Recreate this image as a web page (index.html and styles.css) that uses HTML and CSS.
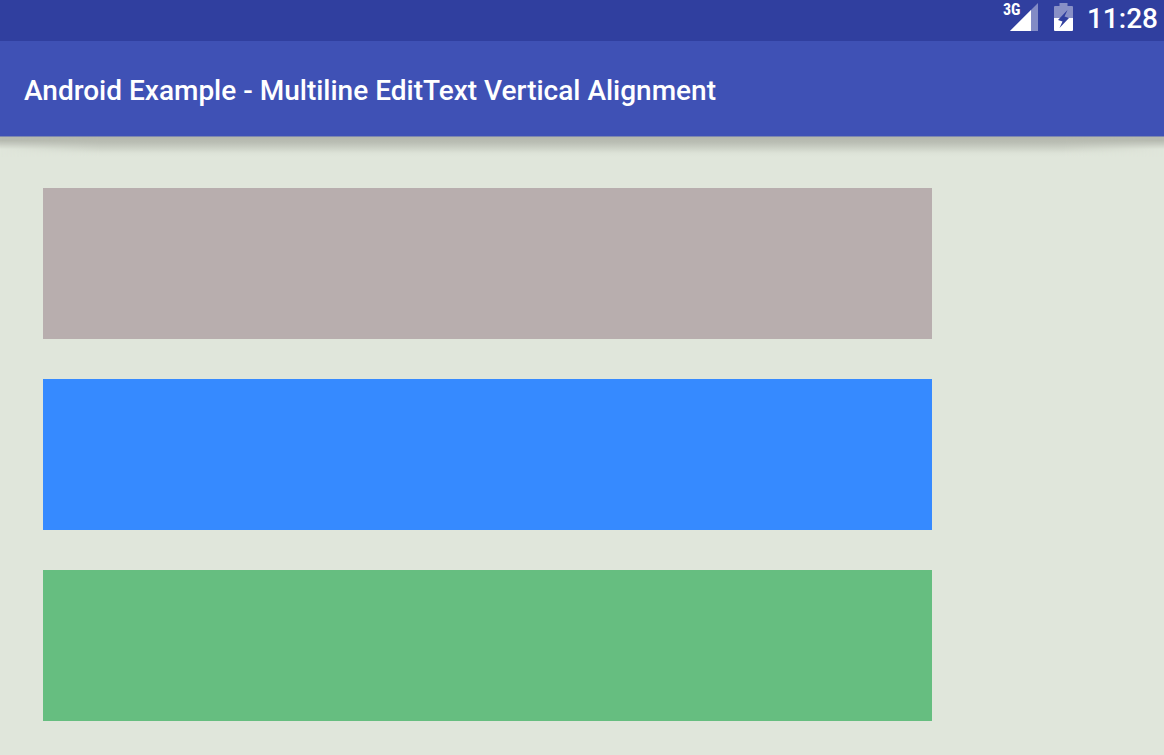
FILE: index.html
```html
<!DOCTYPE html>
<html lang="en">
<head>
<meta charset="utf-8">
<meta name="viewport" content="width=device-width, initial-scale=1">
<title>Android Example - Multiline EditText Vertical Alignment</title>
<link rel="stylesheet" href="styles.css">
</head>
<body>
<div class="status-bar">
  <div class="signal">
    <span class="network">3G</span>
    <svg class="signal-icon" width="28" height="28" viewBox="0 0 28 28" aria-hidden="true">
      <path d="M0 28 28 0V28Z" fill="#fff" fill-opacity=".4"/>
      <path d="M0 28 21 7V28Z" fill="#fff"/>
    </svg>
  </div>
  <svg class="battery-icon" width="19" height="28" viewBox="0 0 19 28" aria-hidden="true">
    <path fill="#8890c6" d="M5.500 0h8v3H18q1 0 1 1v11H0V4q0-1 1-1h4.500Z"/>
    <path fill="#fff" d="M0 15h19v12q0 1-1 1H1q-1 0-1-1Z"/>
    <path fill="#303f9f" d="M13.500 7 4 17l4.500 1.500L5.500 25 15 15l-4.500-1.500Z"/>
  </svg>
  <time class="clock">11:28</time>
</div>
<header class="app-bar">
  <h1 class="title">Android Example - Multiline EditText Vertical Alignment</h1>
</header>
<main class="content">
  <textarea class="field field-top" aria-label="Top aligned text"></textarea>
  <textarea class="field field-center" aria-label="Center aligned text"></textarea>
  <textarea class="field field-bottom" aria-label="Bottom aligned text"></textarea>
</main>
</body>
</html>
```
FILE: styles.css
```css
* {
  box-sizing: border-box;
}

body {
  margin: 0;
  min-height: 100vh;
  background: #e0e6db;
  color: #fff;
  font-family: Roboto, "Liberation Sans", sans-serif;
}

.status-bar {
  display: flex;
  justify-content: flex-end;
  align-items: flex-start;
  height: 41px;
  padding: 3px 6px 0 0;
  background: #303f9f;
}

.signal {
  position: relative;
  display: flex;
  padding-left: 7px;
  margin-right: 16px;
}

.network {
  position: absolute;
  left: 0;
  top: -1px;
  font-family: "Roboto Condensed", Roboto, sans-serif;
  font-size: 16px;
  font-weight: 700;
  line-height: 16px;
}

.battery-icon {
  margin-right: 14px;
}

.signal-icon,
.battery-icon {
  display: block;
}

.clock {
  font-size: 28px;
  font-weight: 500;
  line-height: 32px;
}

.app-bar {
  position: relative;
  display: flex;
  align-items: center;
  min-height: 96px;
  padding: 4px 24px 0;
  background: #3f51b5;
  border-bottom: 1px solid #7d88b0;
}

.app-bar::before,
.app-bar::after {
  content: "";
  position: absolute;
  left: 0;
  right: 0;
  top: calc(100% + 1px);
}

.app-bar::before {
  height: 12px;
  background: #b7bbb1;
  mask-image: linear-gradient(#000, #000 30%, transparent);
}

.app-bar::after {
  height: 20px;
  background: linear-gradient(#b5b8ad, #b9bdb3 25%, #ccd1c6 55%, #dce2d7 80%, #e0e6db);
  mask-image: linear-gradient(90deg, transparent, #000 100px, #000 calc(100% - 100px), transparent);
}

.title {
  margin: 0;
  font-size: 28px;
  font-weight: 500;
  line-height: 32px;
}

.content {
  display: flex;
  flex-direction: column;
  gap: 40px;
  padding: 51px 43px 34px;
}

.field {
  width: 100%;
  max-width: 889px;
  height: 151px;
  padding: 8px;
  border: 0;
  border-radius: 0;
  outline: 0;
  resize: none;
  font: inherit;
  font-size: 28px;
}

.field-top {
  background: #b8aeae;
}

.field-center {
  background: #368aff;
}

.field-bottom {
  background: #66be80;
}
```
